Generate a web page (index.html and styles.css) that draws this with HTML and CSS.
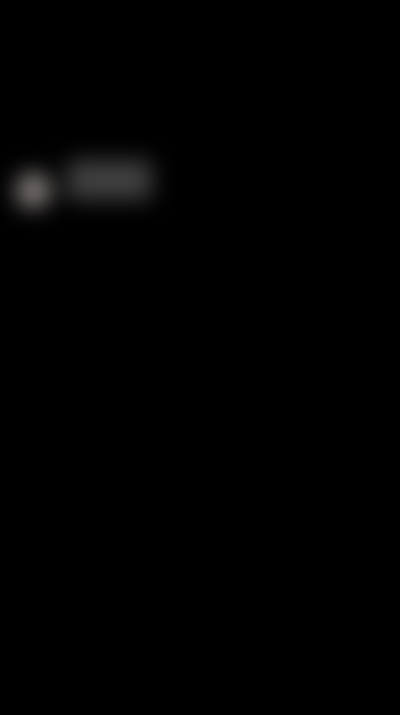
FILE: index.html
```html
<!DOCTYPE html>
<html lang="en">
<head>
<meta charset="utf-8">
<title>Loading</title>
<link rel="stylesheet" href="styles.css">
</head>
<body>
<main class="screen">
  <div class="row">
    <div class="avatar"></div>
    <div class="label"></div>
  </div>
</main>
</body>
</html>
```

FILE: styles.css
```css
html, body {
  margin: 0;
  height: 100%;
  background: #000;
}
.screen {
  height: 715px;
  overflow: hidden;
  background: #000;
  padding: 157px 0 0 15px;
  box-sizing: border-box;
}
.row {
  display: flex;
  align-items: flex-start;
  gap: 15px;
  filter: blur(11px);
}
.avatar {
  width: 37px;
  height: 37px;
  margin-top: 15px;
  border-radius: 50%;
  background: #7f7977;
}
.label {
  width: 85px;
  height: 40px;
  margin-top: 3px;
  border-radius: 4px;
  background: #404040;
}
```
